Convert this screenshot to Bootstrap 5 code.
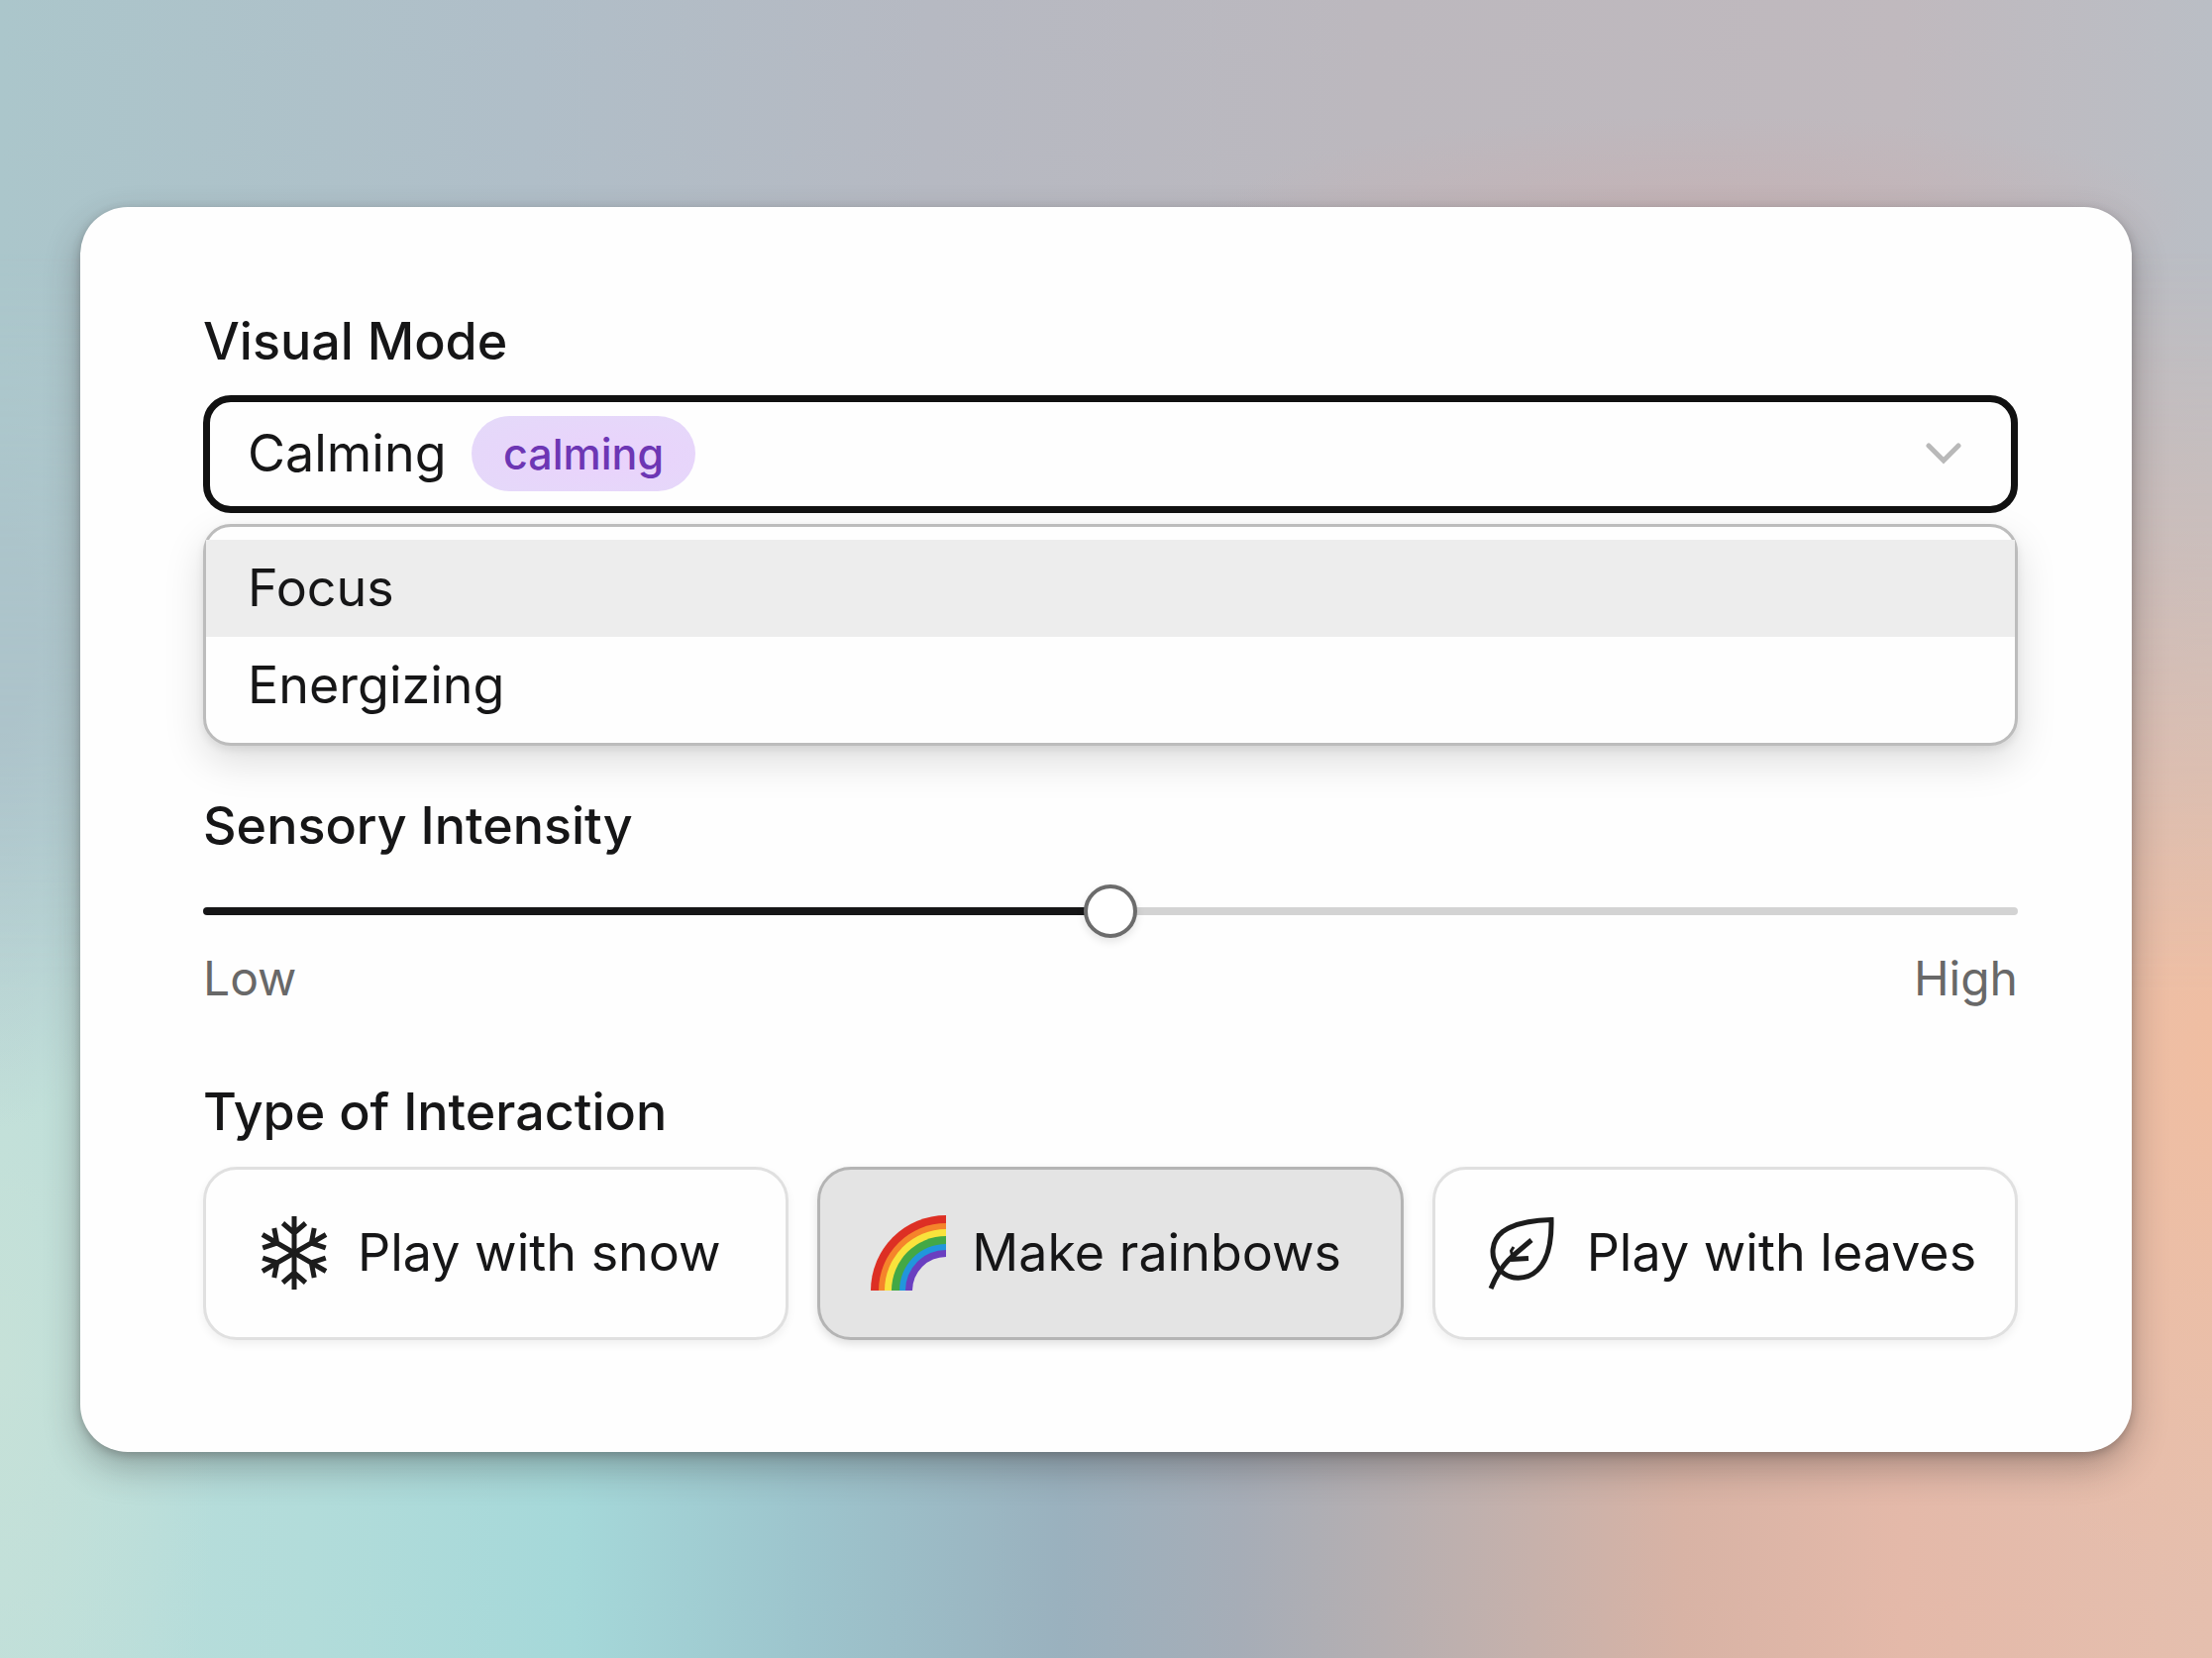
<!DOCTYPE html>
<html lang="en">
<head>
<meta charset="utf-8">
<meta name="viewport" content="width=device-width, initial-scale=1">
<title>Sensory settings</title>
<link href="https://cdn.jsdelivr.net/npm/bootstrap@5.3.0/dist/css/bootstrap.min.css" rel="stylesheet">
<style>
  body {
    font-family: Inter, "Liberation Sans", sans-serif;
    color: #161617;
    background:
      radial-gradient(ellipse 22% 6% at 77% 13%, #c4b2b5, #c4b2b500),
      linear-gradient(90deg, #abc6cb 0%, #b0bec8 24%, #b6b9c2 42%, #bcb8be 62%, #c0b9be 86%, #babec5 100%);
    position: relative;
    isolation: isolate;
  }
  /* lower half of the backdrop fades in over the upper one */
  body::before {
    content: "";
    position: absolute;
    inset: 0;
    z-index: -1;
    background:
      radial-gradient(ellipse 8% 30% at 0% 38%, #aec2ca 20%, #aec2ca00 100%),
      radial-gradient(ellipse 10% 40% at 0% 82%, #c6e1d8 0%, #c6e1d800 100%),
      radial-gradient(ellipse 14% 32% at 100% 64%, #f0bea2 0%, #f0bea200 100%),
      linear-gradient(90deg, #bcdedb 0%, #b2dcda 14%, #a5d8d9 26%, #9dc5cd 36%, #9ab1be 48%, #a6adb7 56%, #beb0ae 66%, #d8b3a5 76%, #e4b9a9 86%, #e5bfae 100%);
    -webkit-mask-image: linear-gradient(180deg, transparent 15%, #000 60%);
    mask-image: linear-gradient(180deg, transparent 15%, #000 60%);
  }
  .settings-panel {
    margin: 0 81px;
    padding: 104px 115px 113px 124px;
    border: 0;
    border-radius: 48px;
    background: #fefefe;
    box-shadow: 0 16px 36px rgba(50, 45, 45, .32), 0 3px 10px rgba(50, 45, 45, .28);
  }
  .field-label { font-size: 52px; line-height: 64px; font-weight: 500; color: #161617; }
  .mode-select {
    height: 119px;
    padding: 0 100px 0 38px;
    border: 7px solid #111;
    border-radius: 28px;
    font-size: 52px;
    line-height: 64px;
    color: #161617;
    background-color: #fefefe;
    background-image: url("data:image/svg+xml,%3Csvg xmlns='http://www.w3.org/2000/svg' viewBox='0 0 36 22'%3E%3Cpath d='M3 3l15 15L33 3' fill='none' stroke='%23b9b9b9' stroke-width='5' stroke-linecap='round'/%3E%3C/svg%3E");
    background-size: 36px 22px;
    background-position: right 50px center;
  }
  .mode-select:focus { border-color: #111; box-shadow: none; }
  .mode-tag {
    left: 271px;
    padding: 12px 32px;
    font-size: 43px;
    line-height: 52px;
    font-weight: 500;
    color: #6d36b4;
    background: radial-gradient(ellipse at 60% 55%, #ead2fc, #e4daf9);
    pointer-events: none;
  }
  .mode-menu {
    margin-top: 11px;
    padding: 13px 0 9px;
    border: 3px solid #bcbcbc;
    border-radius: 28px;
    background: #fefefe;
    box-shadow: 0 16px 40px rgba(0, 0, 0, .13), 0 4px 8px rgba(0, 0, 0, .08);
  }
  .mode-menu .dropdown-item { padding: 17px 42px; font-size: 52px; line-height: 64px; color: #161617; }
  .mode-menu .dropdown-item.active { background: #ededed; }
  .intensity-block { margin-top: 49px; }
  .interaction-block { margin-top: 73px; }
  .intensity-range { height: 54px; }
  .intensity-range::-webkit-slider-runnable-track {
    height: 8px;
    border-radius: 4px;
    background: linear-gradient(90deg, #161617 50%, #d3d3d3 50%);
  }
  .intensity-range::-webkit-slider-thumb {
    width: 54px;
    height: 54px;
    margin-top: -23px;
    border: 4px solid #6c6c6c;
    border-radius: 50%;
    background: #fff;
    box-shadow: 0 4px 8px rgba(0, 0, 0, .1);
  }
  .range-ends { margin-top: 11px; font-size: 48px; line-height: 60px; color: #686868; }
  .choices { gap: 29px; }
  .choice {
    flex: 1 1 0;
    height: 175px;
    gap: 26px;
    padding: 0 0 0 51px;
    border: 3px solid #e0e0e0;
    border-radius: 34px;
    font-size: 52px;
    line-height: 64px;
    color: #161617;
    background: #fefefe;
    box-shadow: 0 4px 10px rgba(0, 0, 0, .06);
  }
  .choice.active { background: #e4e4e4; border-color: #b4b4b4; color: #161617; box-shadow: 0 4px 10px rgba(0, 0, 0, .12); }
  .choice svg { width: 76px; height: 76px; flex: none; }
  .select-wrap { margin-top: 22px; }
  .range-row { margin-top: 27px; }
  .choices { margin-top: 23px; }
</style>
</head>
<body class="min-vh-100 d-flex flex-column justify-content-center">
<main class="card settings-panel">
  <form>
    <section>
      <label class="field-label d-block" for="mode">Visual Mode</label>
      <div class="select-wrap position-relative d-flex align-items-center">
        <select class="form-select mode-select" id="mode">
          <option selected>Calming</option>
          <option>Focus</option>
          <option>Energizing</option>
        </select>
        <span class="badge rounded-pill mode-tag position-absolute">calming</span>
      </div>
      <div class="dropdown-menu mode-menu show position-static w-100">
        <button type="button" class="dropdown-item active">Focus</button>
        <button type="button" class="dropdown-item">Energizing</button>
      </div>
    </section>

    <section class="intensity-block">
      <label class="field-label d-block" for="intensity">Sensory Intensity</label>
      <input type="range" class="form-range intensity-range range-row d-block" id="intensity" min="0" max="100" value="50">
      <div class="range-ends d-flex justify-content-between"><span>Low</span><span>High</span></div>
    </section>

    <section class="interaction-block" role="group" aria-labelledby="interaction-title">
      <h2 class="field-label mb-0" id="interaction-title">Type of Interaction</h2>
      <div class="choices d-flex">
        <button type="button" class="btn choice d-flex align-items-center text-nowrap" aria-pressed="false">
          <svg viewBox="0 0 76 76" fill="none" stroke="#1c1c1c" stroke-width="5" aria-hidden="true">
            <defs><path id="arm" d="M38 38V1M26.500 8L38 18 49.500 8"/></defs>
            <use href="#arm"/><use href="#arm" transform="rotate(60 38 38)"/><use href="#arm" transform="rotate(120 38 38)"/>
            <use href="#arm" transform="rotate(180 38 38)"/><use href="#arm" transform="rotate(240 38 38)"/><use href="#arm" transform="rotate(300 38 38)"/>
          </svg>
          <span>Play with snow</span>
        </button>
        <button type="button" class="btn choice active d-flex align-items-center text-nowrap" aria-pressed="true">
          <svg viewBox="0 0 76 76" aria-hidden="true">
            <path fill="#dd2f24" d="M0 76A76 76 0 0 1 76 0V76Z"/>
            <path fill="#f5842b" d="M8 76A68 68 0 0 1 76 8V76Z"/>
            <path fill="#f9e33c" d="M14 76A62 62 0 0 1 76 14V76Z"/>
            <path fill="#43a845" d="M21 76A55 55 0 0 1 76 21V76Z"/>
            <path fill="#2196dc" d="M29 76A47 47 0 0 1 76 29V76Z"/>
            <path fill="#6a3fc0" d="M35 76A41 41 0 0 1 76 35V76Z"/>
            <path fill="#e4e4e4" d="M42 76A34 34 0 0 1 76 42V76Z"/>
          </svg>
          <span>Make rainbows</span>
        </button>
        <button type="button" class="btn choice d-flex align-items-center text-nowrap" aria-pressed="false">
          <svg viewBox="0 0 76 76" fill="none" stroke="#1c1c1c" stroke-width="5" aria-hidden="true">
            <path d="M66 4.500C66.500 27 63 45 52 55.500C41 66 23 66 13 54C4 42 5 26 17 16.500C29 8 46 5 66 4.500Z"/>
            <path d="M5 74C9 64 15 52 26 42L46 25M25 44.500L43 43.500"/>
            <path stroke-width="3" d="M27 42L25.500 36 28 32"/>
          </svg>
          <span>Play with leaves</span>
        </button>
      </div>
    </section>
  </form>
</main>
<script src="https://cdn.jsdelivr.net/npm/bootstrap@5.3.0/dist/js/bootstrap.bundle.min.js"></script>
</body>
</html>
